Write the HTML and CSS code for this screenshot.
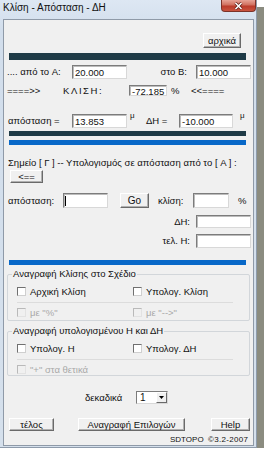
FILE: index.html
```html
<!DOCTYPE html>
<html lang="el">
<head>
<meta charset="utf-8">
<title>Κλίση - Απόσταση - ΔΗ</title>
<link rel="stylesheet" href="styles.css">
</head>
<body>
<div class="window">
  <div class="titlebar">
    <span class="title">Κλίση - Απόσταση - ΔΗ</span>
    <div class="close"><svg width="11" height="8" viewBox="0 0 11 8"><path d="M2.5 1 L8.5 7 M8.5 1 L2.5 7" stroke="#5a1a14" stroke-width="3"/><path d="M2.5 1 L8.5 7 M8.5 1 L2.5 7" stroke="#fff" stroke-width="1.6"/></svg></div>
  </div>
  <div class="client">
    <div class="row row-top"><button class="btn btn-arxika">αρχικά</button></div>
    <div class="bar bar-dark bar-1"></div>

    <div class="row row-ab">
      <span class="lbl lbl-a">.... από το A:</span>
      <span class="edit w55">20.000</span>
      <span class="lbl lbl-b">στο B:</span>
      <span class="edit w55">10.000</span>
    </div>

    <div class="row row-k">
      <span class="lbl lbl-arrow">====&gt;&gt;</span>
      <span class="lbl lbl-klisi">ΚΛΙΣΗ:</span>
      <span class="edit edit-k">-72.185</span>
      <span class="lbl lbl-pct">%</span>
      <span class="lbl">&lt;&lt;====</span>
    </div>

    <div class="row row-d">
      <span class="lbl lbl-a lbl-apost">απόσταση =</span>
      <span class="edit w55">13.853</span>
      <span class="lbl unit unit-1">μ</span>
      <span class="lbl lbl-dh">ΔΗ =</span>
      <span class="edit w54">-10.000</span>
      <span class="lbl unit unit-2">μ</span>
    </div>

    <div class="bar bar-dark bar-2"></div>
    <div class="bar bar-blue bar-3"></div>

    <div class="simeio">Σημείο [ Γ ] -- Υπολογισμός σε απόσταση από το [ A ] :</div>
    <div class="row row-back"><button class="btn btn-back">&lt;==</button></div>

    <div class="row row-calc">
      <span class="lbl lbl-apost2">απόσταση:</span>
      <span class="edit w45"><span class="caret"></span></span>
      <button class="btn btn-go">Go</button>
      <span class="lbl lbl-klisi2">κλίση:</span>
      <span class="edit w36"></span>
      <span class="lbl lbl-pct2">%</span>
    </div>

    <div class="row row-dh">
      <span class="lbl lbl-right">ΔΗ:</span>
      <span class="edit w55"></span>
    </div>
    <div class="row row-tel">
      <span class="lbl lbl-right">τελ. Η:</span>
      <span class="edit w55"></span>
    </div>

    <div class="bar bar-blue bar-4"></div>

    <div class="group group-1">
      <span class="group-title">Αναγραφή Κλίσης στο Σχέδιο</span>
      <div class="chk-row chk-row-first">
        <label class="chk chk-col1"><span class="box"></span>Αρχική Κλίση</label>
        <label class="chk"><span class="box"></span>Υπολογ. Κλίση</label>
      </div>
      <div class="sep"></div>
      <div class="chk-row">
        <label class="chk chk-col1 disabled"><span class="box"></span>με "%"</label>
        <label class="chk disabled"><span class="box"></span>με "--&gt;"</label>
      </div>
    </div>

    <div class="group group-2">
      <span class="group-title">Αναγραφή υπολογισμένου Η και ΔΗ</span>
      <div class="chk-row chk-row-first2">
        <label class="chk chk-col1"><span class="box"></span>Υπολογ. Η</label>
        <label class="chk"><span class="box"></span>Υπολογ. ΔΗ</label>
      </div>
      <div class="sep"></div>
      <div class="chk-row">
        <label class="chk chk-col1 disabled"><span class="box"></span>"+" στα θετικά</label>
      </div>
    </div>

    <div class="row row-dec">
      <span class="lbl lbl-dec">δεκαδικά</span>
      <span class="combo"><span class="combo-val">1</span><span class="combo-btn"><svg width="5" height="3" viewBox="0 0 5 3"><path d="M0 0 H5 L2.5 3 Z" fill="#000"/></svg></span></span>
    </div>

    <div class="row row-btns">
      <button class="btn btn-telos">τέλος</button>
      <button class="btn btn-anagr">Αναγραφή Επιλογών</button>
      <button class="btn btn-help">Help</button>
    </div>

    <div class="row row-foot">
      <span class="lbl lbl-sd">SDTOPO</span>
      <span class="lbl lbl-copy">©3.2-2007</span>
    </div>
  </div>
</div>
</body>
</html>
```

FILE: styles.css
```css
* { box-sizing: border-box; }
html, body { margin: 0; padding: 0; background: #fff; }
body {
  font-family: "Liberation Sans", Arial, sans-serif;
  font-size: 9.5px;
  color: #111;
  line-height: 1;
}

.window {
  width: 257px;
  height: 448px;
  background: linear-gradient(#dde7f3, #d2deec 30px, #d5e0ec);
  box-shadow: 7px 7px 0 #8b8c80;
  padding: 0 2px 2px 3px;
  border-right: 1px solid #8e9bab;
  border-bottom: 1px solid #8e9bab;
  display: flex;
  flex-direction: column;
}

.titlebar {
  height: 19px;
  flex: none;
  display: flex;
  align-items: flex-start;
  justify-content: space-between;
}
.title {
  font-size: 10px;
  padding-top: 3px;
  color: #111;
}
.close {
  width: 35px;
  height: 12px;
  margin-right: -2px;
  background: linear-gradient(#e7a396, #d0705f 45%, #bb3b2b 55%, #c9543f);
  border: 1px solid #7c3228;
  border-top: 0;
  border-radius: 0 0 4px 4px;
  display: flex;
  align-items: center;
  justify-content: center;
}

.client {
  flex: 1;
  background: #f0f0f0;
  border: 1px solid #8f9aa8;
  display: flex;
  flex-direction: column;
}

.row { display: flex; align-items: center; flex: none; }
.lbl { white-space: nowrap; flex: none; }

.btn {
  font: inherit;
  color: #111;
  background: #f0f0f0;
  border: 1px solid;
  border-color: #ffffff #6a6a6a #6a6a6a #ffffff;
  box-shadow: inset -1px -1px 0 #b0b0b0;
  padding: 0;
  margin: 0;
  flex: none;
  display: flex;
  align-items: center;
  justify-content: center;
}

.edit {
  flex: none;
  display: flex;
  align-items: flex-start;
  height: 100%;
  background: #fff;
  border: 1px solid;
  border-color: #7c7c7c #d8d8d8 #d8d8d8 #7c7c7c;
  box-shadow: inset 1px 1px 0 #bcbcbc;
  padding: 2px 0 0 2px;
}
.w55 { width: 55px; }
.w54 { width: 54px; }
.w45 { width: 45px; }
.w36 { width: 36px; }

.bar { flex: none; margin-left: 5px; width: 237px; }
.bar-dark { background: #1f3b47; }
.bar-blue { background: #0868c8; }

.row-top { height: 28px; align-items: flex-end; padding-left: 199px; }
.btn-arxika { width: 38px; height: 15px; }
.bar-1 { margin-top: 5px; height: 7px; }

.row-ab { margin-top: 5px; height: 14px; }
.lbl-a { width: 68px; padding-left: 3px; }
.lbl-b { width: 69px; text-align: right; padding-right: 9px; }

.row-k { margin-top: 6px; height: 11px; }
.lbl-arrow { width: 59px; padding-left: 3px; }
.lbl-klisi { width: 66px; letter-spacing: 1.6px; }
.edit-k { width: 38px; padding-top: 1px; }
.lbl-pct { width: 24px; padding-left: 4px; }

.row-d { margin-top: 18px; height: 14px; }
.lbl-apost { padding-left: 4px; }
.unit { align-self: flex-start; margin-top: -2px; font-size: 8px; }
.unit-1 { width: 19px; padding-left: 3px; }
.lbl-dh { width: 33px; }
.unit-2 { padding-left: 7px; }

.bar-2 { margin-top: 3px; height: 5px; }
.bar-3 { margin-top: 4px; height: 5px; }

.simeio { margin-top: 13px; height: 10px; line-height: 10px; padding-left: 4px; white-space: nowrap; flex: none; }
.row-back { margin-top: 2px; height: 13px; padding-left: 6px; }
.btn-back { width: 33px; height: 13px; }

.row-calc { margin-top: 10px; height: 15px; }
.lbl-apost2 { width: 59px; padding-left: 4px; }
.caret { width: 1px; height: 10px; background: #000; margin-left: -1px; }
.btn-go { width: 29px; height: 15px; margin-left: 12px; font-size: 10px; }
.lbl-klisi2 { width: 44px; padding-left: 9px; }
.lbl-pct2 { padding-left: 9px; }

.row-dh { margin-top: 7px; height: 13px; }
.row-tel { margin-top: 6px; height: 14px; }
.lbl-right { width: 192px; text-align: right; padding-right: 6px; }

.bar-4 { margin-top: 12px; height: 5px; }

.group {
  flex: none;
  margin-left: 3px;
  width: 243px;
  border: 1px solid #d2d6da;
  border-radius: 2px;
  display: flex;
  flex-direction: column;
}
.group-title {
  align-self: flex-start;
  margin: -6px 0 0 4px;
  padding: 0 1px;
  height: 10px;
  line-height: 10px;
  background: #f0f0f0;
  white-space: nowrap;
}
.group-1 { margin-top: 9px; height: 47px; }
.group-2 { margin-top: 10px; height: 45px; }

.chk-row { display: flex; align-items: center; height: 9px; margin-top: 5px; padding-left: 9px; }
.chk-row-first { margin-top: 8px; }
.chk-row-first2 { margin-top: 8px; }
.chk { display: flex; align-items: center; gap: 4px; white-space: nowrap; }
.chk-col1 { width: 116px; }
.box {
  width: 9px;
  height: 9px;
  background: #fff;
  border: 1px solid;
  border-color: #707070 #cfcfcf #cfcfcf #707070;
}
.chk.disabled { color: #a9a9a9; }
.chk.disabled .box { background: #f0f0f0; border-color: #b9b9b9 #e2e2e2 #e2e2e2 #b9b9b9; }
.sep { margin: 6px 0 0 9px; width: 216px; height: 1px; background: #dcdcdc; }

.row-dec { margin-top: 15px; height: 13px; padding-left: 81px; }
.lbl-dec { width: 51px; }
.combo {
  display: flex;
  width: 32px;
  height: 13px;
  background: #fff;
  border: 1px solid;
  border-color: #7c7c7c #d8d8d8 #d8d8d8 #7c7c7c;
}
.combo-val { flex: 1; padding: 1px 0 0 3px; font-size: 10px; }
.combo-btn {
  width: 11px;
  background: #f0f0f0;
  border: 1px solid;
  border-color: #fff #6a6a6a #6a6a6a #fff;
  display: flex;
  align-items: center;
  justify-content: center;
}

.row-btns { margin-top: 14px; height: 13px; padding-left: 5px; }
.btn-telos { width: 45px; height: 13px; }
.btn-anagr { width: 107px; height: 13px; margin-left: 24px; }
.btn-help { width: 39px; height: 13px; margin-left: 26px; }

.row-foot { margin-top: 4px; height: 10px; padding-left: 166px; font-size: 8px; }
.lbl-sd { width: 38px; }
.lbl-copy { letter-spacing: 0.3px; }
```
